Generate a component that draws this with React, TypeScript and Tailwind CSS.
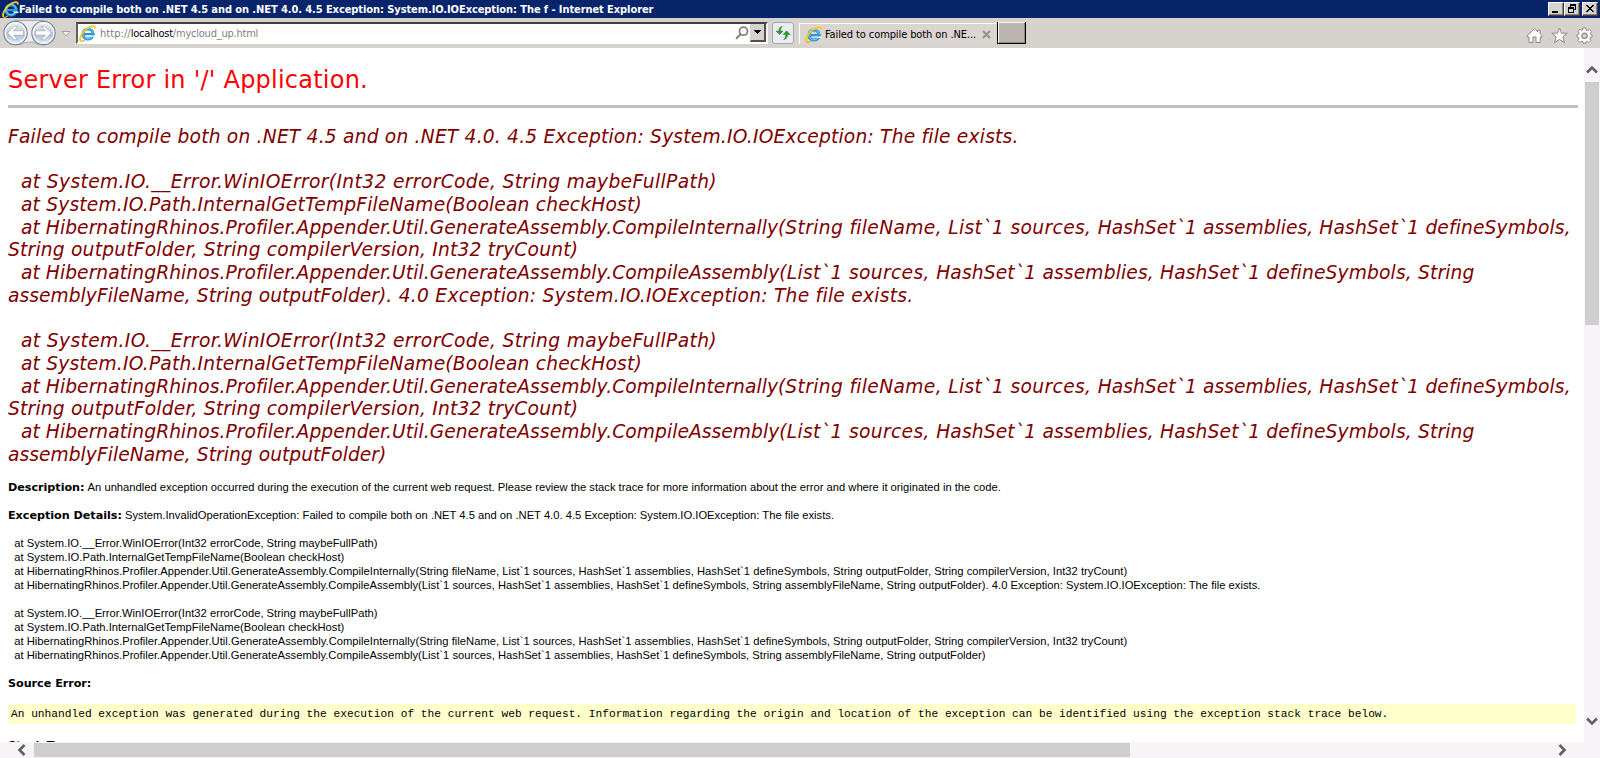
import type { ReactNode } from 'react';

function IeLogo() {
  return (
    <svg width="17" height="17" viewBox="0 0 17 17" className="shrink-0">
      <circle cx="9" cy="9" r="5" fill="none" stroke="#2b98dc" strokeWidth="3.2" />
      <circle cx="9" cy="8.6" r="5.2" fill="none" stroke="#7fcdf5" strokeWidth="1" />
      <rect x="5" y="8" width="10.5" height="2.3" fill="#2a97da" />
      <path d="M10.5 10.4h6v1.7h-4z" fill="#f4f7fa" />
      <path d="M1.6 16C-.4 13.5 3.5 6 9 2.8 12.5.7 16.2.2 15.8 3.6" fill="none" stroke="#f9c81c" strokeWidth="1.9" />
      <path d="M1.6 16c1 .8 3-.2 4.3-1.3" fill="none" stroke="#e8a90f" strokeWidth="1.2" />
    </svg>
  );
}

function NavButtons() {
  return (
    <svg width="58" height="29" viewBox="0 0 58 29" className="shrink-0">
      <defs>
        <linearGradient id="orb" x1="0" y1="0" x2="0" y2="1">
          <stop offset="0" stopColor="#f3f4f6" />
          <stop offset=".42" stopColor="#ccd1d9" />
          <stop offset=".58" stopColor="#b3bdca" />
          <stop offset="1" stopColor="#e2f7ff" />
        </linearGradient>
      </defs>
      <path d="M14.500 2.500H42.500A12.500 12.500 0 0 1 42.500 27C37 27 35 24 29 24S20 27 14.500 27A12.500 12.300 0 0 1 14.500 2.500Z" fill="#ececef" stroke="#a9abb0" />
      {[14.5, 42.5].map((x) => (
        <g key={x}>
          <circle cx={x} cy="15" r="11.600" fill="url(#orb)" stroke="#75869f" strokeWidth="1.300" />
          <circle cx={x} cy="15" r="10.300" fill="none" stroke="#f6fafd" strokeWidth="1.300" />
        </g>
      ))}
      <path d="M6.500 15 13.500 8.300h3.300L12.400 12.800H22.500v4.400H12.400l4.400 4.500h-3.300z" fill="#fff" stroke="#8ea0b8" strokeWidth=".6" />
      <path d="M50.500 15 43.500 8.300h-3.300l4.400 4.500H34.500v4.400h10.100l-4.400 4.500h3.300z" fill="#fff" stroke="#8ea0b8" strokeWidth=".6" />
    </svg>
  );
}

function Chevron({ d, w, h }: { d: string; w: number; h: number }) {
  return (
    <svg width={w} height={h} viewBox={`0 0 ${w} ${h}`}>
      <path d={d} fill="none" stroke="#606060" strokeWidth="2.600" />
    </svg>
  );
}

function CaptionButton({ children }: { children: ReactNode }) {
  return (
    <div className="h-[14px] w-4 border border-t-white border-l-white border-r-[#404040] border-b-[#404040] bg-[#d6d3ce] shadow-[inset_-1px_-1px_0_#848284]">
      <svg width="14" height="12" viewBox="0 0 14 12" shapeRendering="crispEdges">{children}</svg>
    </div>
  );
}

function TitleBar() {
  return (
    <div className="flex h-[18px] items-center bg-[#08246b] pr-[2px] pl-[2px] text-white">
      <IeLogo />
      <div className="flex-1 pt-px font-['DejaVu_Sans_Condensed','DejaVu_Sans',sans-serif] text-[11px] leading-4 font-bold tracking-[-0.08px] whitespace-nowrap">
        Failed to compile both on .NET 4.5 and on .NET 4.0. 4.5 Exception: System.IO.IOException: The f - Internet Explorer
      </div>
      <div className="flex">
        <CaptionButton><path d="M3 8h6v2H3z" /></CaptionButton>
        <CaptionButton>
          <path d="M5 1h6v2H5zM10 3h1v4H10zM5 3h1v1H5zM9 6h1v1H9z" />
          <path d="M3 4h6v2H3zM3 6h1v4H3zM8 6h1v4H8zM3 9h6v1H3z" />
        </CaptionButton>
        <div className="w-[2px]" />
        <CaptionButton>
          <path d="M3 2h2v1h1v1h2V3h1V2h2v1h-1v1H9v1H8v1h1v1h1v1h1v1H9V8H8V7H6v1H5v1H3V8h1V7h1V6h1V5H5V4H4V3H3z" />
        </CaptionButton>
      </div>
    </div>
  );
}

function Toolbar() {
  return (
    <div className="flex h-[30px] items-start bg-[#d6d3ce] font-['DejaVu_Sans_Condensed','DejaVu_Sans',sans-serif] text-[11px]">
      <div className="ml-px h-[29px]"><NavButtons /></div>
      <svg width="10" height="7" viewBox="0 0 10 7" className="mt-[13px] ml-[2px]">
        <path d="M1 .5h8L5 5z" fill="#f2f1ef" stroke="#a5a29e" />
      </svg>
      <div className="mt-1 ml-[5px] flex h-[22px] w-[692px] items-center border-t-2 border-r-2 border-b-2 border-l-2 border-t-[#404040] border-r-[#f7f6f5] border-b-white border-l-[#606060] bg-white pl-px">
        <IeLogo />
        <div className="ml-[4px] flex flex-1 pt-[2px] text-[#808080]">
          <span className="tracking-[0.05px]">http://</span>
          <span className="tracking-[-0.25px] text-black">localhost</span>
          <span className="tracking-[-0.22px]">/mycloud_up.html</span>
        </div>
        <svg width="14" height="14" viewBox="0 0 14 14" className="mr-px">
          <circle cx="8.500" cy="5.200" r="4" fill="none" stroke="#808080" strokeWidth="1.800" />
          <path d="M5.500 8.200 1 12.800" stroke="#808080" strokeWidth="2" />
        </svg>
        <div className="flex h-[18px] w-4 items-center justify-center border-r-2 border-b-2 border-l border-r-[#505050] border-b-[#505050] border-l-[#d6d3ce] bg-[#d6d3ce]">
          <svg width="7" height="4" viewBox="0 0 7 4" shapeRendering="crispEdges"><path d="M0 0h7L3.500 4z" /></svg>
        </div>
      </div>
      <div className="mt-1 ml-[4px] flex size-[22px] items-center justify-center rounded-[3px] border border-[#a4a8ae] bg-[#e9ebf1]">
        <svg width="16" height="16" viewBox="0 0 16 16">
          <path d="M7.300 1.500C5 1.500 3.800 3.500 3.800 6H1L4.500 9.500 8 6H5.600C5.600 4 6 2.500 7.300 1.500Z" fill="#2f9a2f" stroke="#1d7a1d" strokeWidth=".4" />
          <path d="M8.700 14.500C11 14.500 12.500 12.500 12.500 9.500h2.700L11.600 5.800 8 9.500h2.600C10.600 12 10 13.500 8.700 14.500Z" fill="#2f9a2f" stroke="#1d7a1d" strokeWidth=".4" />
        </svg>
      </div>
      <div className="mt-[5px] ml-[5px] flex h-[21px] w-[198px] items-center border-t border-l border-white bg-[#dad5d0] pl-[5px]">
        <IeLogo />
        <span className="ml-[3px] pt-[2px] tracking-[-0.1px] whitespace-nowrap text-black">Failed to compile both on .NE...</span>
        <svg width="9" height="9" viewBox="0 0 9 9" className="ml-[6px]">
          <path d="m1 1 7 7M8 1 1 8" stroke="#949290" strokeWidth="2.200" />
        </svg>
      </div>
      <div className="mt-1 h-[22px] w-[29px] border-r border-b border-l border-black bg-[#bdb6b0] shadow-[inset_1px_1px_0_#f5f5f5,inset_-1px_-1px_0_#8c8a86]" />
      <div className="flex-1" />
      <div className="mt-[9px] mr-[7px] flex gap-[8px]">
        <svg width="17" height="17" viewBox="0 0 17 17">
          <path d="M8.500 1.500 12 4.800V3h2v3.800l2 2V10h-1.700v5.500H10V10H7v5.500H3V10H1V8.800z" fill="#fff" stroke="#8b8987" />
        </svg>
        <svg width="17" height="17" viewBox="0 0 17 17">
          <path d="m8.500 1 2 5.200h5.700L11.800 9.800l1.700 6L8.500 12.400l-5 3.400 1.700-6L.8 6.200h5.700z" fill="#fff" stroke="#8b8987" />
        </svg>
        <svg width="17" height="17" viewBox="0 0 17 17">
          <path d="M7 1h3l.4 2.200 1.300.5 1.900-1.200 2 2-1.200 1.900.4 1.200L16 8v2l-1.600.4-.6 1.300 1 1.800-2 2-1.700-1.100-1.300.5L9.500 16.500h-2L7 14.800l-1.300-.5-1.900 1.100-2-2L3 11.600l-.4-1.200L1 10V7.600l1.600-.4.5-1.400-1.100-1.600 2-2 1.600 1.100L6.700 3z" fill="#fff" stroke="#8b8987" />
          <circle cx="8.500" cy="8.800" r="2.700" fill="#d6d3ce" stroke="#8b8987" strokeWidth="1.200" />
        </svg>
      </div>
    </div>
  );
}

function StackHeading({ tail }: { tail: string }) {
  return (
    <>
      <div className="pl-[13px] tracking-[0.365px]">at System.IO.__Error.WinIOError(Int32 errorCode, String maybeFullPath)</div>
      <div className="pl-[13px] tracking-[0.18px]">at System.IO.Path.InternalGetTempFileName(Boolean checkHost)</div>
      <div className="pl-[13px]">
        <span className="tracking-[0.06px]">at HibernatingRhinos.Profiler.Appender.Util.GenerateAssembly.CompileInternally(</span>
        <span className="tracking-[0.35px]">String fileName, </span>
        <span className="tracking-[0.36px]">List`1 sources, </span>
        <span className="tracking-[0.05px]">HashSet`1 assemblies, </span>
        <span className="tracking-[0.13px]">HashSet`1 defineSymbols,</span>
      </div>
      <div className="tracking-[0.2px]">String outputFolder, String compilerVersion, Int32 tryCount)</div>
      <div className="pl-[13px]">
        <span className="tracking-[0.06px]">at HibernatingRhinos.Profiler.Appender.Util.GenerateAssembly.CompileAssembly(</span>
        <span className="tracking-[0.36px]">List`1 sources, </span>
        <span className="tracking-[0.15px]">HashSet`1 assemblies, HashSet`1 defineSymbols, String</span>
      </div>
      <div>
        <span className="tracking-[0.04px]">assemblyFileName, String outputFolder)</span>
        <span className="tracking-[0.26px]">{tail}</span>
      </div>
    </>
  );
}

function StackDetails({ tail }: { tail: string }) {
  return (
    <>
      <div className="tracking-[0.012px]">{'  at System.IO.__Error.WinIOError(Int32 errorCode, String maybeFullPath)'}</div>
      <div className="tracking-[0.03px]">{'  at System.IO.Path.InternalGetTempFileName(Boolean checkHost)'}</div>
      <div className="tracking-[0.02px]">{'  at HibernatingRhinos.Profiler.Appender.Util.GenerateAssembly.CompileInternally(String fileName, List`1 sources, HashSet`1 assemblies, HashSet`1 defineSymbols, String outputFolder, String compilerVersion, Int32 tryCount)'}</div>
      <div className="tracking-[0.015px]">{'  at HibernatingRhinos.Profiler.Appender.Util.GenerateAssembly.CompileAssembly(List`1 sources, HashSet`1 assemblies, HashSet`1 defineSymbols, String assemblyFileName, String outputFolder)' + tail}</div>
    </>
  );
}

function Label({ children }: { children: ReactNode }) {
  return <b className="font-['DejaVu_Sans',sans-serif] tracking-[-0.03px]">{children}</b>;
}

function ErrorPage() {
  return (
    <div className="h-[694px] w-[1584px] overflow-hidden bg-white pt-[18px] pr-[6px] pl-2 whitespace-pre text-black">
      <h1 className="h-7 font-['DejaVu_Sans',sans-serif] text-2xl leading-7 tracking-[0.23px] text-[#ff0000]">Server Error in '/' Application.</h1>
      <div className="mt-[11px] h-[3px] bg-[#c0c0c0]" />
      <h2 className="mt-[18px] h-[340px] font-['DejaVu_Sans',sans-serif] text-[18.67px] leading-[22.69px] text-[#800000] italic">
        <div className="tracking-[0.2px]">Failed to compile both on .NET 4.5 and on .NET 4.0. 4.5 Exception: System.IO.IOException: The file exists.</div>
        <div className="h-[22.69px]" />
        <StackHeading tail=". 4.0 Exception: System.IO.IOException: The file exists." />
        <div className="h-[22.69px]" />
        <StackHeading tail="" />
      </h2>
      <div className="mt-[14px] flex flex-col gap-[14px] font-['Liberation_Sans',Arial,sans-serif] text-[11.2px] leading-[14px]">
        <div className="h-[14px]"><Label>Description:</Label> <span className="tracking-[0.005px]">An unhandled exception occurred during the execution of the current web request. Please review the stack trace for more information about the error and where it originated in the code.</span></div>
        <div className="h-[14px]"><Label>Exception Details:</Label> <span className="tracking-[0.01px]">System.InvalidOperationException: Failed to compile both on .NET 4.5 and on .NET 4.0. 4.5 Exception: System.IO.IOException: The file exists.</span></div>
        <div><StackDetails tail=". 4.0 Exception: System.IO.IOException: The file exists." /></div>
        <div><StackDetails tail="" /></div>
        <div className="h-[14px]"><Label>Source Error:</Label></div>
        <div className="mr-[2px] h-5 bg-[#ffffcc] pl-[3px] font-['Liberation_Mono',monospace] leading-[21px] tracking-[0.005px]">An unhandled exception was generated during the execution of the current web request. Information regarding the origin and location of the exception can be identified using the exception stack trace below.</div>
        <div className="h-[14px]"><Label>Stack Trace:</Label></div>
      </div>
    </div>
  );
}

export default function App() {
  return (
    <div className="flex h-[758px] w-[1600px] flex-col overflow-hidden bg-white">
      <TitleBar />
      <Toolbar />
      <div className="flex">
        <ErrorPage />
        <div className="flex h-[694px] w-4 flex-col items-center bg-[#f7f3f7]">
          <div className="flex h-[34px] items-end pb-2"><Chevron w={12} h={9} d="M1 7.500 6 2.500l5 5" /></div>
          <div className="h-[243px] w-[14px] bg-[#cecece]" />
          <div className="flex-1" />
          <div className="pb-4"><Chevron w={12} h={9} d="M1 1.500 6 6.500l5-5" /></div>
        </div>
      </div>
      <div className="flex h-4 items-center bg-[#f7f3f7]">
        <div className="flex w-[34px] justify-end pr-2"><Chevron w={9} h={12} d="M7.500 1 2.500 6l5 5" /></div>
        <div className="h-[14px] w-[1096px] bg-[#cecece]" />
        <div className="flex-1" />
        <div className="pr-[33px]"><Chevron w={9} h={12} d="M1.500 1 6.500 6l-5 5" /></div>
      </div>
    </div>
  );
}
